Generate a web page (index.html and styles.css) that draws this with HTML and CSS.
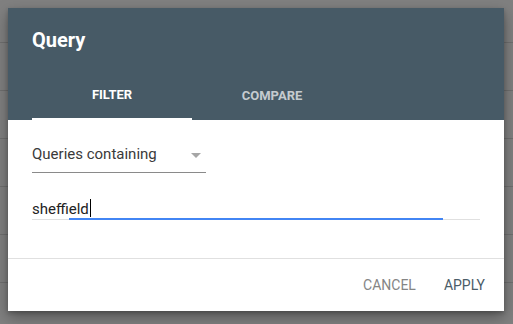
FILE: index.html
```html
<!DOCTYPE html>
<html>
<head>
<meta charset="utf-8">
<link rel="stylesheet" href="styles.css">
</head>
<body>
<div class="dialog">
  <div class="header">
    <div class="title">Query</div>
    <div class="tabs">
      <div class="tab active">FILTER</div>
      <div class="tab">COMPARE</div>
    </div>
  </div>
  <div class="content">
    <div class="select">
      <span class="select-label">Queries containing</span>
      <span class="arrow"></span>
    </div>
    <div class="input">
      <span class="input-text">sheffield</span><span class="caret"></span>
    </div>
  </div>
  <div class="footer">
    <span class="btn cancel">CANCEL</span>
    <span class="btn apply">APPLY</span>
  </div>
</div>
</body>
</html>
```
FILE: styles.css
```css
html, body {
  margin: 0;
  padding: 0;
}
body {
  width: 513px;
  height: 324px;
  overflow: hidden;
  font-family: Roboto, "Liberation Sans", sans-serif;
  background-color: #808080;
  background-image: repeating-linear-gradient(to bottom, transparent 0, transparent 42px, #6f6f6f 42px, #6f6f6f 43px, transparent 43px, transparent 48px);
  padding: 8px 0 0 8px;
  box-sizing: border-box;
}
.dialog {
  width: 496px;
  height: 303px;
  background: #fff;
  box-shadow: 0 6px 14px rgba(0, 0, 0, 0.35), 0 2px 4px rgba(0, 0, 0, 0.2);
  display: flex;
  flex-direction: column;
}
.header {
  background: #475a66;
  padding: 20px 24px 0;
  height: 112px;
  box-sizing: border-box;
}
.title {
  color: #fff;
  font-size: 20px;
  font-weight: 700;
  line-height: 24px;
  margin-bottom: 20px;
}
.tabs {
  display: flex;
  height: 48px;
}
.tab {
  width: 160px;
  text-align: center;
  font-size: 13px;
  font-weight: 700;
  line-height: 48px;
  color: rgba(255, 255, 255, 0.7);
  box-sizing: border-box;
}
.tab.active {
  color: #fff;
  border-bottom: 2px solid #fff;
  line-height: 46px;
}
.content {
  padding: 24px 24px 0;
  height: 139px;
  box-sizing: border-box;
  border-bottom: 1px solid #e0e0e0;
}
.select {
  width: 174px;
  display: flex;
  align-items: center;
  justify-content: space-between;
  padding-bottom: 8px;
  border-bottom: 1px solid #8a8a8a;
}
.select-label {
  font-size: 15px;
  line-height: 20px;
  color: #3a3a3a;
}
.arrow {
  width: 0;
  height: 0;
  border-left: 5px solid transparent;
  border-right: 5px solid transparent;
  border-top: 5px solid #a6a6a6;
  margin-right: 5px;
  margin-top: 2px;
}
.input {
  position: relative;
  width: 448px;
  margin-top: 26px;
  border-bottom: 1px solid #e0e0e0;
  display: flex;
  align-items: center;
  height: 20px;
}
.input::after {
  content: "";
  position: absolute;
  left: 37px;
  width: 374px;
  bottom: -1px;
  height: 2px;
  background: #4285f4;
}
.input-text {
  font-size: 15px;
  line-height: 20px;
  color: #222;
}
.caret {
  display: inline-block;
  width: 1px;
  height: 18px;
  background: #000;
  margin-left: 1px;
  margin-top: -2px;
}
.footer {
  flex: 1;
  display: flex;
  justify-content: flex-end;
  align-items: center;
  gap: 28px;
  padding-right: 19px;
}
.btn {
  font-size: 14px;
  line-height: 20px;
}
.cancel {
  color: #858585;
}
.apply {
  color: #4b5c68;
}
```
